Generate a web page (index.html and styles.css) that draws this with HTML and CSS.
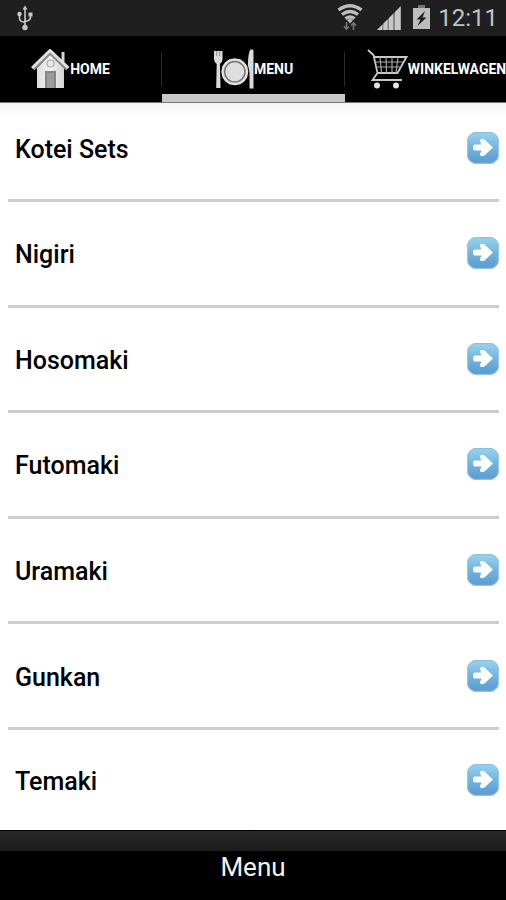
FILE: index.html
```html
<!DOCTYPE html>
<html lang="nl">
<head>
<meta charset="utf-8">
<meta name="viewport" content="width=device-width, initial-scale=1">
<title>Menu</title>
<link rel="stylesheet" href="styles.css">
</head>
<body>
<svg class="defs" aria-hidden="true">
  <defs>
    <linearGradient id="blue" x1="0" y1="0" x2="0" y2="1">
      <stop offset="0" stop-color="#97d3ec"/>
      <stop offset="0.5" stop-color="#70b4df"/>
      <stop offset="1" stop-color="#5b9bd2"/>
    </linearGradient>
    <linearGradient id="silver" x1="0" y1="0" x2="1" y2="0">
      <stop offset="0" stop-color="#dcdcdc"/>
      <stop offset="0.5" stop-color="#f2f2f2"/>
      <stop offset="1" stop-color="#d2d2d2"/>
    </linearGradient>
    <symbol id="arrow" viewBox="0 0 32 32">
      <path d="M8 0.700h16q2 0 4 1.700l2 2q1.300 1.600 1.300 3.600v16q0 2-1.300 3.600l-2 2q-2 1.700-4 1.700H8q-2 0-4-1.700l-2-2Q.7 26 .7 24V8q0-2 1.300-3.600l2-2Q6 .7 8 .7z" fill="url(#blue)" stroke="#8fc0de" stroke-width="1.200"/>
      <path d="M8 12.500h6.500l-1.300-3q-.7-2.500 1.300-2.500h1.500q1 0 2 1l8 7.500-8 7.500q-1 1-2 1h-1.500q-2 0-1.300-2.500l1.300-3H8q-2 0-2-3t2-3z" fill="#fff"/>
    </symbol>
  </defs>
</svg>
<div class="screen">
  <header class="status">
    <svg class="usb" width="18" height="26" viewBox="0 0 18 26" fill="none" stroke="#c8c8c8" stroke-width="1.600" aria-hidden="true">
      <path d="M9 3v20M3.500 10v3.500q0 3 5.500 4M14.500 9v3.500q0 3-5.500 4"/>
      <path d="M9 0.500l2.500 4h-5zM12.500 7.500h4v4h-4z" fill="#c8c8c8" stroke="none"/>
      <circle cx="3.500" cy="9" r="2.200" fill="#c8c8c8" stroke="none"/>
      <circle cx="9" cy="22.500" r="2.700" fill="#c8c8c8" stroke="none"/>
    </svg>
    <div class="signals">
      <svg class="wifi" width="26" height="28" viewBox="0 0 26 28" fill="none" stroke="#bdbdbd" stroke-width="3.400" aria-hidden="true">
        <path d="M1.500 7q11.500-8.500 23 0M5 11.500q8-6 16 0M8.500 15.700q4.500-3.600 9 0"/>
        <path d="M10 17q3-2 6 0l-3 3.500z" fill="#bdbdbd" stroke="none"/>
        <path d="M9.500 19v7M7 23.500l2.500 2.500 2.500-2.500M16.500 27v-7M14 22.500l2.500-2.500 2.500 2.500" stroke="#777" stroke-width="1.600"/>
      </svg>
      <svg class="bars" width="24" height="24" viewBox="0 0 24 24" aria-hidden="true">
        <path d="M0 24L24 0v24z" fill="#888"/>
        <path d="M0 24l5-5v5zM6.500 17.500l4-4V24h-4zM12 12l4-4v16h-4zM18 6l5.500-5.500V24H18z" fill="#c8c8c8"/>
      </svg>
      <svg class="battery" width="17" height="24" viewBox="0 0 17 24" aria-hidden="true">
        <path d="M5 0h7v3H5z" fill="#777"/>
        <path d="M0 3h17v21H0z" fill="#bdbdbd"/>
        <path d="M12 6L3.500 14.500h4L4.500 21l9-8.500h-4z" fill="#1b1b1b"/>
      </svg>
      <time class="clock">12:11</time>
    </div>
  </header>

  <nav class="tabs" aria-label="Tabbladen">
    <a class="tab" href="#home">
      <svg width="39" height="40" viewBox="0 0 39 40" aria-hidden="true">
        <path d="M30.500 3h3v10h-3z" fill="#d5d5d5"/>
        <path d="M6 19L19.500 5 33 19v20H6z" fill="url(#silver)"/>
        <path d="M2.500 20.500L19 4l17 16.500" fill="none" stroke="#888" stroke-width="3"/>
        <path d="M1 19L19 1.500 37.500 19" fill="none" stroke="#e2e2e2" stroke-width="3"/>
        <circle cx="19.500" cy="14.500" r="3.500" fill="#e8e8e8" stroke="#aaa" stroke-width="1.200"/>
        <path d="M14 22h11v17H14z" fill="#858585"/>
        <path d="M16 24h7v15h-7z" fill="#9c9c9c"/>
      </svg><span>HOME</span>
    </a>
    <a class="tab active" href="#menu" aria-current="page">
      <svg width="40" height="40" viewBox="0 0 40 40" aria-hidden="true">
        <path d="M0 2h8.500v8.500Q8 14 6 15l.500 24H2.200L2.700 15Q.5 14 0 10.500z" fill="#dadada"/>
        <path d="M2.700 2v5M5.700 2v5" stroke="#888" stroke-width=".9"/>
        <path d="M36 1q3-2 3.500 1v37.500h-4V24l-1.500-4q-.5-13 2-19z" fill="#dadada"/>
        <circle cx="20.800" cy="22.800" r="14" fill="#e2e2e2" stroke="#000" stroke-width="1"/>
        <circle cx="20.800" cy="22.800" r="10.200" fill="#dedede" stroke="#777" stroke-width="1.500"/>
      </svg><span>MENU</span>
    </a>
    <a class="tab" href="#winkelwagen">
      <svg width="41" height="40" viewBox="0 0 41 40" fill="none" stroke="#c9c9c9" aria-hidden="true">
        <path d="M1 1l5.500 5L10.500 24 5.500 31H35" stroke-width="1.800"/>
        <path d="M6.500 8H39.500L30.500 24H10.500" stroke-width="1.800"/>
        <path d="M8 13h29M9 18h25.500M13 8l1.500 16M19 8l.5 16M25 8v16M31 8l-2 16" stroke-width="1.200" stroke="#a5a5a5"/>
        <circle cx="10" cy="36.500" r="3" fill="#e5e5e5" stroke="none"/>
        <circle cx="29" cy="36.500" r="3" fill="#e5e5e5" stroke="none"/>
      </svg><span>WINKELWAGEN</span>
    </a>
  </nav>

  <main class="content">
    <ul class="list">
      <li><a href="#kotei-sets"><span>Kotei Sets</span><svg class="go" aria-hidden="true"><use href="#arrow"/></svg></a></li>
      <li><a href="#nigiri"><span>Nigiri</span><svg class="go" aria-hidden="true"><use href="#arrow"/></svg></a></li>
      <li><a href="#hosomaki"><span>Hosomaki</span><svg class="go" aria-hidden="true"><use href="#arrow"/></svg></a></li>
      <li><a href="#futomaki"><span>Futomaki</span><svg class="go" aria-hidden="true"><use href="#arrow"/></svg></a></li>
      <li><a href="#uramaki"><span>Uramaki</span><svg class="go" aria-hidden="true"><use href="#arrow"/></svg></a></li>
      <li><a href="#gunkan"><span>Gunkan</span><svg class="go" aria-hidden="true"><use href="#arrow"/></svg></a></li>
      <li><a href="#temaki"><span>Temaki</span><svg class="go" aria-hidden="true"><use href="#arrow"/></svg></a></li>
    </ul>
  </main>

  <footer class="bottom">
    <button type="button">Menu</button>
  </footer>
</div>
</body>
</html>
```
FILE: styles.css
```css
* { box-sizing: border-box; }

body {
  margin: 0;
  background: #fff;
  color: #000;
  font-family: Roboto, "Liberation Sans", sans-serif;
}

a { color: inherit; text-decoration: none; }
svg { display: block; flex: none; }

.defs { position: absolute; width: 0; height: 0; }

.screen {
  display: flex;
  flex-direction: column;
  min-height: 100vh;
}

/* Status bar */
.status {
  display: flex;
  align-items: center;
  justify-content: space-between;
  height: 36px;
  padding: 0 8px 0 16px;
  background: #1f1f1f;
}

.signals { display: flex; align-items: center; }
.wifi { margin-bottom: 2px; }
.bars { margin-left: 14px; }
.battery { margin: 0 0 2px 12px; }

.clock {
  margin-left: 8px;
  color: #c4c4c4;
  font-size: 24px;
  line-height: 32px;
}

/* Tab strip, centred on the active tab */
.tabs {
  display: flex;
  justify-content: center;
  height: 67px;
  padding-left: 1px;
  overflow: hidden;
  background: #000;
  border-bottom: 1px solid #777;
}

.tab {
  display: flex;
  flex: 0 0 183px;
  align-items: center;
  justify-content: center;
  border-bottom: 8px solid transparent;
  padding-top: 8px;
  color: #fff;
  font-size: 14px;
  font-weight: 700;
  background: linear-gradient(#2c2c2c, #2c2c2c) no-repeat right 16px / 1px 34px;
}

.tab.active { border-bottom-color: #c8c8c8; }

/* Menu list */
.content {
  display: flex;
  flex: 1;
  padding: 0 7px 0 8px;
  background: linear-gradient(#f4f4f4, #fff 14px);
}

.list {
  display: flex;
  flex: 1;
  flex-direction: column;
  margin: 0;
  padding: 0;
  list-style: none;
}

.list li {
  display: flex;
  flex: 1 0 80px;
  border-bottom: 3px solid #cdcdcd;
}

.list li:first-child { flex: 0 0 99px; padding-bottom: 6px; }
.list li:last-child { flex: 0 0 100px; border-bottom: 0; }

.list a {
  display: flex;
  flex: 1;
  align-items: center;
  justify-content: space-between;
  padding-left: 7px;
  font-size: 25px;
  font-weight: 500;
}

.list span { padding-top: 3px; }

.go { width: 32px; height: 32px; }

/* Bottom bar */
.bottom {
  padding-top: 20px;
  border-top: 1px solid #000;
  background: linear-gradient(#282828, #1b1b1b) no-repeat top / 100% 20px #000;
}

.bottom button {
  display: block;
  width: 100%;
  height: 49px;
  padding: 0 0 16px;
  border: 0;
  background: #000;
  color: #f2f2f2;
  font-family: inherit;
  font-size: 26px;
  line-height: 31px;
}
```
